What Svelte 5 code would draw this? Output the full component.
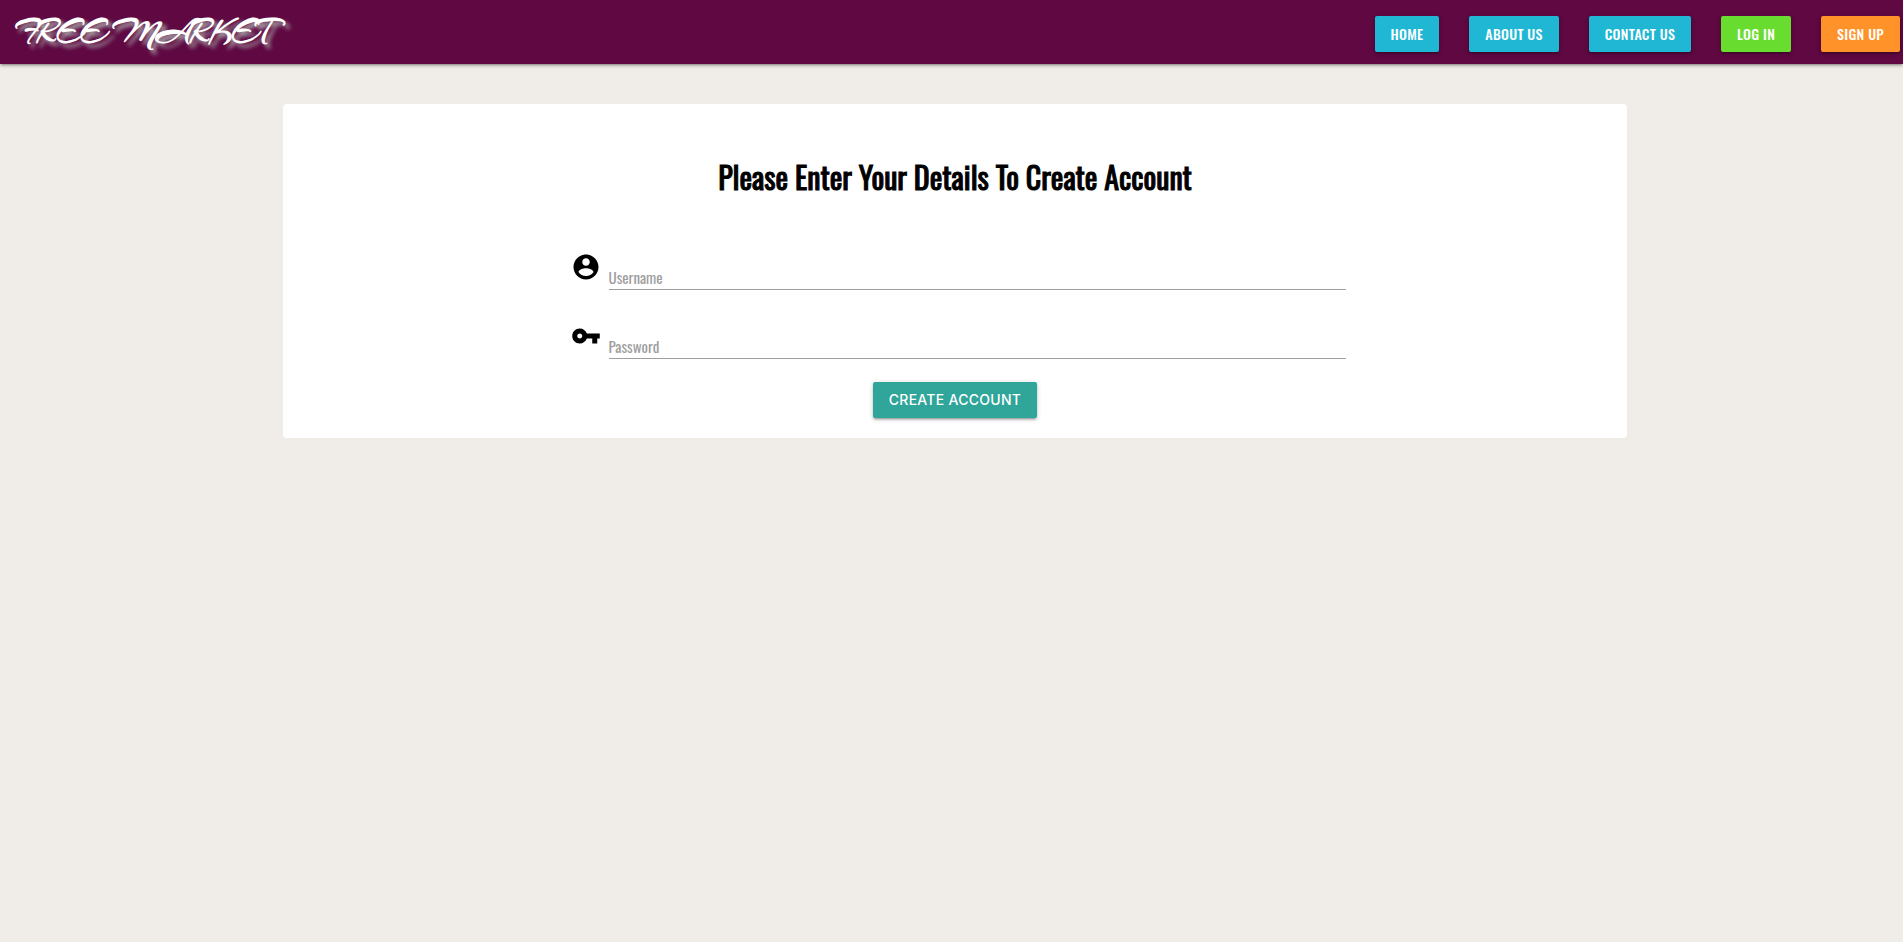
<script>
  const links = [
    { label: 'Home', tone: 'info' },
    { label: 'About Us', tone: 'info' },
    { label: 'Contact Us', tone: 'info' },
    { label: 'Log In', tone: 'login' },
    { label: 'Sign Up', tone: 'signup' }
  ];
  let username = $state('');
  let password = $state('');
</script>

<header>
  <a class="brand" href="#home">FREE MARKET</a>
  <nav>
    {#each links as link}
      <a class="button {link.tone}" href="#{link.tone}">{link.label}</a>
    {/each}
  </nav>
</header>

<main>
  <section class="card">
    <h1>Please Enter Your Details To Create Account</h1>
    <form onsubmit={(event) => event.preventDefault()}>
      <div class="field">
        <label for="username" aria-label="Username">
          <svg viewBox="0 0 24 24" aria-hidden="true"><path d="M12 2C6.48 2 2 6.48 2 12s4.48 10 10 10 10-4.48 10-10S17.52 2 12 2zm0 3c1.66 0 3 1.34 3 3s-1.34 3-3 3-3-1.34-3-3 1.34-3 3-3zm0 14.2c-2.5 0-4.71-1.28-6-3.22.03-1.99 4-3.08 6-3.08 1.99 0 5.97 1.09 6 3.08-1.29 1.94-3.5 3.22-6 3.22z" /></svg>
        </label>
        <input id="username" type="text" placeholder="Username" bind:value={username} />
      </div>
      <div class="field">
        <label for="password" aria-label="Password">
          <svg viewBox="0 0 24 24" aria-hidden="true"><path d="M12.65 10C11.83 7.67 9.61 6 7 6c-3.31 0-6 2.69-6 6s2.69 6 6 6c2.61 0 4.83-1.67 5.65-4H17v4h4v-4h2v-4H12.65zM7 14c-1.1 0-2-.9-2-2s.9-2 2-2 2 .9 2 2-.9 2-2 2z" /></svg>
        </label>
        <input id="password" type="password" placeholder="Password" bind:value={password} />
      </div>
      <button class="button submit" type="submit">Create Account</button>
    </form>
  </section>
</main>

<style>
  :global(body) {
    margin: 0;
    background: #f0ece7;
    font-family: Oswald, 'Roboto Condensed', 'Liberation Sans Narrow', 'Liberation Sans', sans-serif;
  }

  header {
    display: flex;
    align-items: flex-start;
    justify-content: space-between;
    min-height: 64px;
    padding: 0 3px 0 15px;
    box-sizing: border-box;
    background: #5f0842;
    box-shadow: 0 2px 2px 0 rgba(0, 0, 0, 0.14), 0 3px 1px -2px rgba(0, 0, 0, 0.12), 0 1px 5px 0 rgba(0, 0, 0, 0.2);
  }

  .brand {
    color: #fff;
    font-family: Arizonia, 'Brush Script MT', 'Liberation Serif', cursive;
    font-size: 33px;
    font-weight: 700;
    line-height: 64px;
    text-decoration: none;
    text-shadow: 4px 4px 4px #aaa;
    white-space: nowrap;
  }

  nav {
    display: flex;
    gap: 30px;
    padding-top: 16px;
  }

  .button {
    box-sizing: border-box;
    height: 36px;
    padding: 0 16px;
    border: 0;
    border-radius: 2px;
    color: #fff;
    font-size: 14px;
    font-weight: 500;
    letter-spacing: 0.02em;
    line-height: 36px;
    text-align: center;
    text-decoration: none;
    text-transform: uppercase;
    white-space: nowrap;
    cursor: pointer;
    box-shadow: 0 2px 2px 0 rgba(0, 0, 0, 0.14), 0 3px 1px -2px rgba(0, 0, 0, 0.12), 0 1px 5px 0 rgba(0, 0, 0, 0.2);
  }

  .info {
    background: #1fb7d4;
  }

  .login {
    background: #69dc30;
  }

  .signup {
    background: #ff9228;
  }

  main {
    padding: 40px 0 40px 7px;
  }

  .card {
    box-sizing: border-box;
    width: 71%;
    max-width: 1344px;
    margin: 0 auto;
    padding: 49px 24px 20px;
    border-radius: 4px;
    background: #fff;
  }

  h1 {
    margin: 0 0 49px;
    color: #000;
    font-size: 30px;
    font-weight: 400;
    line-height: 48px;
    text-align: center;
    -webkit-text-stroke: 1px #000;
  }

  form {
    display: flex;
    flex-direction: column;
    align-items: center;
  }

  .field {
    display: flex;
    gap: 8px;
    width: 60%;
    max-width: 775px;
    margin-left: 6px;
  }

  .field + .field {
    margin-top: 29px;
  }

  .field label {
    flex: none;
    width: 30px;
    height: 30px;
    margin-top: 2px;
  }

  svg {
    display: block;
    width: 30px;
    height: 30px;
    fill: #000;
  }

  input {
    flex: 1;
    min-width: 0;
    height: 40px;
    box-sizing: border-box;
    padding: 15px 0 0;
    border: 0;
    border-bottom: 1px solid #9e9e9e;
    outline: 0;
    background: transparent;
    color: #000;
    font-family: inherit;
    font-size: 15px;
  }

  input::placeholder {
    color: #9e9e9e;
    opacity: 1;
  }

  .submit {
    margin-top: 23px;
    background: #30a59a;
    font-family: Inter, sans-serif;
  }
</style>
